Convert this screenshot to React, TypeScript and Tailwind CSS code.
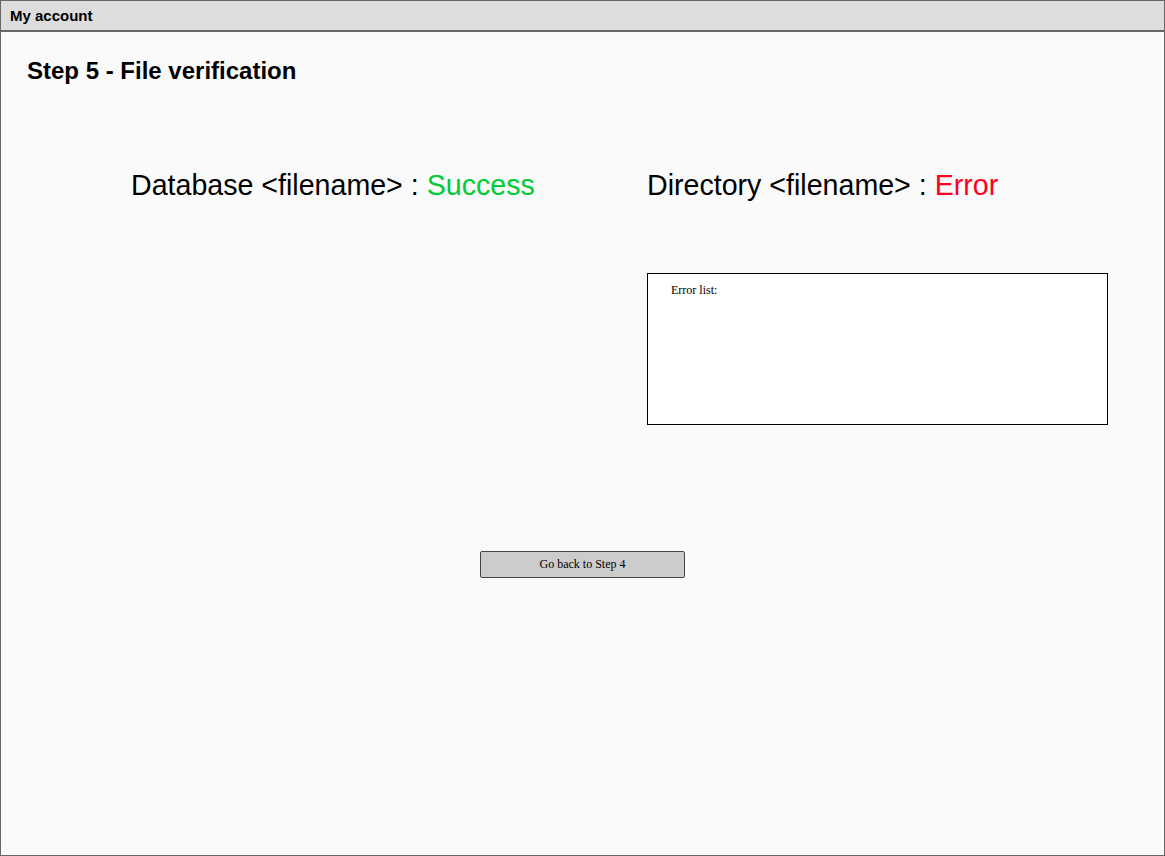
import React from 'react';

const App: React.FC = () => {
    return (
        <div className="w-[1165px] h-[856px] border border-[#666666] bg-[#fafafa] flex flex-col font-['Liberation_Sans',Arial,sans-serif] text-black">
            <div className="h-[31px] bg-[#dddddd] border-b-2 border-[#666666] flex items-center px-[9px] pt-[2px] shrink-0">
                <span className="text-[15px] font-bold">My account</span>
            </div>

            <div className="flex-1 flex flex-col">
                <h1 className="mt-[23px] ml-[26px] text-[24px] leading-[32px] font-bold">Step 5 - File verification</h1>

                <div className="mt-[81px] flex pl-[130px]">
                    <div className="w-[516px] text-[28.6px] leading-[34px]">
                        Database &lt;filename&gt; : <span className="text-[#00cc33]">Success</span>
                    </div>
                    <div className="flex flex-col">
                        <div className="text-[28.6px] leading-[34px]">
                            Directory &lt;filename&gt; : <span className="text-[#ff0022]">Error</span>
                        </div>
                        <div className="mt-[71px] w-[461px] h-[152px] bg-white border border-black pl-[23px] pt-[3px]">
                            <span className="text-[12px] font-['Liberation_Serif',serif]">Error list:</span>
                        </div>
                    </div>
                </div>

                <div className="mt-[126px] flex justify-center">
                    <button className="w-[205px] h-[27px] bg-[#cccccc] border border-[#444444] rounded-[2px] text-[12px] font-['Liberation_Serif',serif] flex items-center justify-center pb-[2px]">
                        Go back to Step 4
                    </button>
                </div>
            </div>
        </div>
    );
};

export default App;
